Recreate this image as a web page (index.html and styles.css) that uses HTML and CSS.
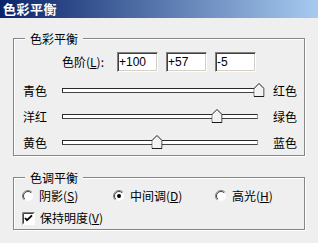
FILE: index.html
```html
<!DOCTYPE html>
<html lang="zh">
<head>
<meta charset="utf-8">
<link rel="stylesheet" href="styles.css">
</head>
<body>
<div class="titlebar">色彩平衡</div>
<div class="content">
  <div class="group g1">
    <span class="legend">色彩平衡</span>
    <div class="levels">
      <span class="lvl-label">色阶(<u>L</u>):</span>
      <div class="inputs">
        <div class="field">+100</div>
        <div class="field">+57</div>
        <div class="field">-5</div>
      </div>
    </div>
    <div class="slider-row">
      <span class="lab-l">青色</span>
      <div class="track"><span class="thumb" style="left:100%"><svg width="11" height="14" viewBox="0 0 11 14"><path d="M5.5 0.5 L10.5 5.5 V13.5 H0.5 V5.5 Z" fill="#f2f2f2" stroke="#1a1a1a" stroke-width="1"/><path d="M1.5 12.5 V6 L5.5 2" fill="none" stroke="#fff" stroke-width="1"/></svg></span></div>
      <span class="lab-r">红色</span>
    </div>
    <div class="slider-row">
      <span class="lab-l">洋红</span>
      <div class="track"><span class="thumb" style="left:78.5%"><svg width="11" height="14" viewBox="0 0 11 14"><path d="M5.5 0.5 L10.5 5.5 V13.5 H0.5 V5.5 Z" fill="#f2f2f2" stroke="#1a1a1a" stroke-width="1"/><path d="M1.5 12.5 V6 L5.5 2" fill="none" stroke="#fff" stroke-width="1"/></svg></span></div>
      <span class="lab-r">绿色</span>
    </div>
    <div class="slider-row">
      <span class="lab-l">黄色</span>
      <div class="track"><span class="thumb" style="left:47.5%"><svg width="11" height="14" viewBox="0 0 11 14"><path d="M5.5 0.5 L10.5 5.5 V13.5 H0.5 V5.5 Z" fill="#f2f2f2" stroke="#1a1a1a" stroke-width="1"/><path d="M1.5 12.5 V6 L5.5 2" fill="none" stroke="#fff" stroke-width="1"/></svg></span></div>
      <span class="lab-r">蓝色</span>
    </div>
  </div>

  <div class="group g2">
    <span class="legend">色调平衡</span>
    <div class="radios">
      <div class="radio r1">
        <svg width="12" height="12" viewBox="0 0 12 12"><circle cx="6" cy="6" r="5" fill="#fff"/><path d="M9.9 2.1 A5.5 5.5 0 0 0 2.1 9.9" fill="none" stroke="#808080"/><path d="M9.2 2.8 A4.5 4.5 0 0 0 2.8 9.2" fill="none" stroke="#404040"/></svg>
        <span>阴影(<u>S</u>)</span>
      </div>
      <div class="radio r2">
        <svg width="12" height="12" viewBox="0 0 12 12"><circle cx="6" cy="6" r="5" fill="#fff"/><path d="M9.9 2.1 A5.5 5.5 0 0 0 2.1 9.9" fill="none" stroke="#808080"/><path d="M9.2 2.8 A4.5 4.5 0 0 0 2.8 9.2" fill="none" stroke="#404040"/><circle cx="6" cy="6" r="2" fill="#000"/></svg>
        <span>中间调(<u>D</u>)</span>
      </div>
      <div class="radio r3">
        <svg width="12" height="12" viewBox="0 0 12 12"><circle cx="6" cy="6" r="5" fill="#fff"/><path d="M9.9 2.1 A5.5 5.5 0 0 0 2.1 9.9" fill="none" stroke="#808080"/><path d="M9.2 2.8 A4.5 4.5 0 0 0 2.8 9.2" fill="none" stroke="#404040"/></svg>
        <span>高光(<u>H</u>)</span>
      </div>
    </div>
    <div class="check">
      <svg width="13" height="13" viewBox="0 0 13 13"><rect x="0" y="0" width="13" height="13" fill="#fff"/><path d="M0.5 12.5 V0.5 H12.5" fill="none" stroke="#808080"/><path d="M1.5 11.5 V1.5 H11.5" fill="none" stroke="#404040"/><path d="M3 6 L5 8.2 L10 3.4" fill="none" stroke="#000" stroke-width="1.8"/></svg>
      <span>保持明度(<u>V</u>)</span>
    </div>
  </div>
</div>
</body>
</html>
```

FILE: styles.css
```css
* { box-sizing: border-box; }
html, body {
  margin: 0;
  padding: 0;
  width: 318px;
  height: 243px;
  overflow: hidden;
  background: #efefef;
  font-family: "Noto Sans CJK SC", "Liberation Sans", sans-serif;
  font-size: 12px;
  color: #000;
}
u { text-decoration: underline; text-underline-offset: 1px; }

.titlebar {
  height: 18px;
  background: linear-gradient(to right, #0a246a, #a6caf0);
  color: #fff;
  font-weight: bold;
  font-size: 13px;
  letter-spacing: 0.5px;
  line-height: 18px;
  padding-left: 3px;
}

.content {
  padding: 20px 13px 0 13px;
}

.group {
  position: relative;
  border: 1px solid #868686;
  box-shadow: inset 1px 1px 0 #fff, 1px 1px 0 #fff;
}
.g1 {
  height: 118px;
  padding: 13px 0 0 0;
}
.g2 {
  margin-top: 21px;
  height: 53px;
  padding: 11px 0 0 8px;
}
.legend {
  position: absolute;
  top: -7px;
  left: 11px;
  padding: 0 5px;
  background: #efefef;
  line-height: 14px;
}

.levels {
  display: flex;
  align-items: center;
  height: 20px;
  padding-left: 48px;
}
.lvl-label {
  width: 55px;
  line-height: 14px;
}
.inputs {
  display: flex;
  gap: 8px;
}
.field {
  width: 41px;
  height: 20px;
  background: #fff;
  border-style: solid;
  border-width: 1px;
  border-color: #808080 #fff #fff #808080;
  box-shadow: inset 1px 1px 0 #404040, inset -1px -1px 0 #d4d0c8;
  font-family: "Liberation Sans", Arial, sans-serif;
  font-size: 12px;
  line-height: 18px;
  padding-left: 1px;
}

.levels + .slider-row { margin-top: 5px; }
.slider-row {
  display: flex;
  align-items: center;
  height: 26px;
  padding-left: 9px;
}
.lab-l {
  width: 39px;
  line-height: 14px;
  padding-top: 1px;
}
.track {
  position: relative;
  width: 196px;
  height: 5px;
  background: #fff;
  border: 1px solid #2a2a2a;
  border-right-color: #9a9a9a;
  border-bottom-color: #444;
}
.thumb {
  position: absolute;
  top: -6px;
  width: 11px;
  height: 14px;
  margin-left: 2px;
  transform: translateX(-50%);
  display: block;
}
.thumb svg { display: block; }
.lab-r {
  margin-left: 15px;
  line-height: 14px;
  padding-top: 1px;
}

.radios {
  display: flex;
  height: 14px;
  align-items: center;
}
.radio {
  display: flex;
  align-items: center;
  gap: 5px;
  line-height: 14px;
}
.radio svg { flex: none; }
.r1 { width: 91px; }
.r2 { width: 102px; }
.check {
  display: flex;
  align-items: center;
  gap: 5px;
  height: 14px;
  margin-top: 8px;
  line-height: 14px;
}
.check svg { flex: none; }
```
